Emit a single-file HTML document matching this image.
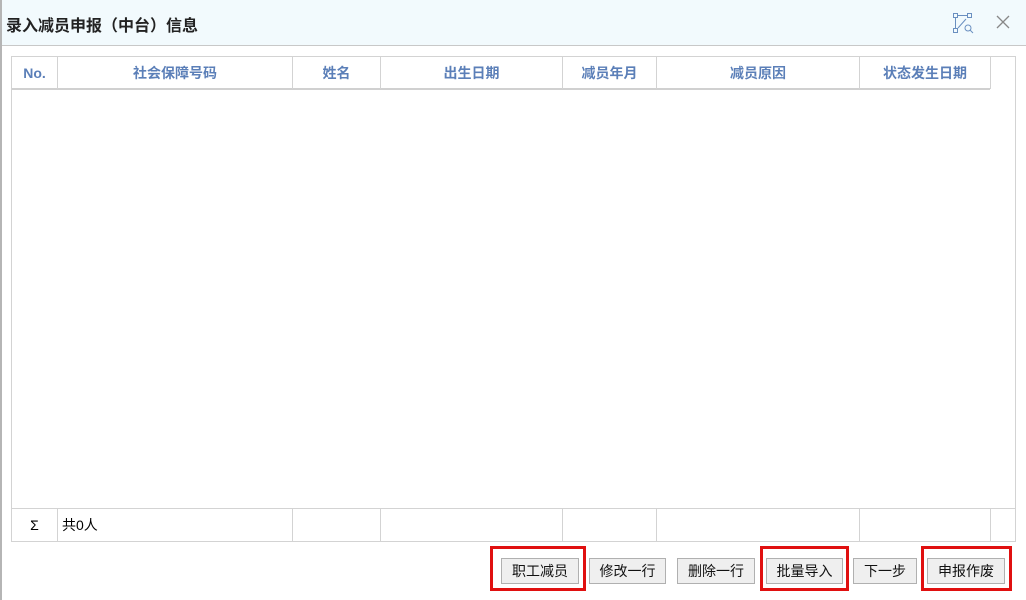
<!DOCTYPE html><html><head><meta charset="utf-8"><style>
body{margin:0;width:1026px;height:600px;position:relative;background:#fff;font-family:"Liberation Sans","Noto Sans CJK SC",sans-serif;overflow:hidden}
.a{position:absolute}
.title{left:0;top:0;width:1026px;height:45px;background:#f2fafd;border-bottom:1px solid #c8c8c8}
.lb{left:0;top:0;width:2px;height:600px;background:#b5b5b5}
.tb{left:11px;top:56px;width:1003px;height:484px;border:1px solid #d3d3d3}
.v{top:57px;width:1px;height:32px;background:#d3d3d3}
.vf{top:509px;width:1px;height:32px;background:#d3d3d3}
.h{top:57px;height:32px;line-height:32px;text-align:center;color:#5b7fb8;font-weight:bold;font-size:14px}
.btn{top:558px;height:26px;border:1px solid #b0b0b0;background:#efefef;font-size:14px;line-height:25px;text-align:center;color:#111;box-sizing:border-box}
.red{top:546px;height:45px;border:3px solid #e01010;box-sizing:border-box}
</style></head><body>
<div class="a title"></div>
<div class="a lb"></div>
<div class="a" style="left:6px;top:12px;font-size:16px;font-weight:bold;color:#222">录入减员申报（中台）信息</div>
<svg class="a" style="left:950px;top:11px" width="26" height="24" viewBox="0 0 26 24" fill="none" stroke="#6a8fc0" stroke-width="1"><rect x="3.5" y="2.5" width="4" height="4"/><rect x="17.5" y="2.5" width="4" height="4"/><rect x="3.5" y="17.5" width="4" height="4"/><path d="M7.5 4.5h10M5.5 6.5v11M8 17l8-9"/><circle cx="18" cy="17" r="3"/><path d="M20 19l3 3"/></svg>
<svg class="a" style="left:996px;top:15px" width="14" height="14" stroke="#888" stroke-width="1.3"><path d="M1 1L13 13M13 1L1 13"/></svg>
<div class="a tb"></div>
<div class="a" style="left:12px;top:88px;width:978px;height:2px;background:#d0d0d0"></div>
<div class="a" style="left:990px;top:57px;width:1px;height:32px;background:#d3d3d3"></div>
<div class="a" style="left:12px;top:508px;width:1003px;height:1px;background:#d3d3d3"></div>
<div class="a v" style="left:57px"></div><div class="a v" style="left:292px"></div><div class="a v" style="left:380px"></div><div class="a v" style="left:562px"></div><div class="a v" style="left:656px"></div><div class="a v" style="left:859px"></div>
<div class="a vf" style="left:57px"></div><div class="a vf" style="left:292px"></div><div class="a vf" style="left:380px"></div><div class="a vf" style="left:562px"></div><div class="a vf" style="left:656px"></div><div class="a vf" style="left:859px"></div><div class="a vf" style="left:990px"></div>
<div class="a h" style="left:12px;width:45px">No.</div>
<div class="a h" style="left:58px;width:234px">社会保障号码</div>
<div class="a h" style="left:293px;width:87px">姓名</div>
<div class="a h" style="left:381px;width:181px">出生日期</div>
<div class="a h" style="left:563px;width:93px">减员年月</div>
<div class="a h" style="left:657px;width:202px">减员原因</div>
<div class="a h" style="left:860px;width:130px">状态发生日期</div>
<div class="a" style="left:12px;width:45px;top:509px;line-height:32px;text-align:center;font-size:14px">Σ</div>
<div class="a" style="left:62px;top:509px;line-height:32px;font-size:14px">共0人</div>
<div class="a btn" style="left:501px;width:78px">职工减员</div>
<div class="a btn" style="left:589px;width:77px">修改一行</div>
<div class="a btn" style="left:677px;width:78px">删除一行</div>
<div class="a btn" style="left:766px;width:77px">批量导入</div>
<div class="a btn" style="left:853px;width:64px">下一步</div>
<div class="a btn" style="left:927px;width:78px">申报作废</div>
<div class="a red" style="left:490px;width:96px"></div>
<div class="a red" style="left:760px;width:89px"></div>
<div class="a red" style="left:921px;width:91px"></div>
</body></html>
